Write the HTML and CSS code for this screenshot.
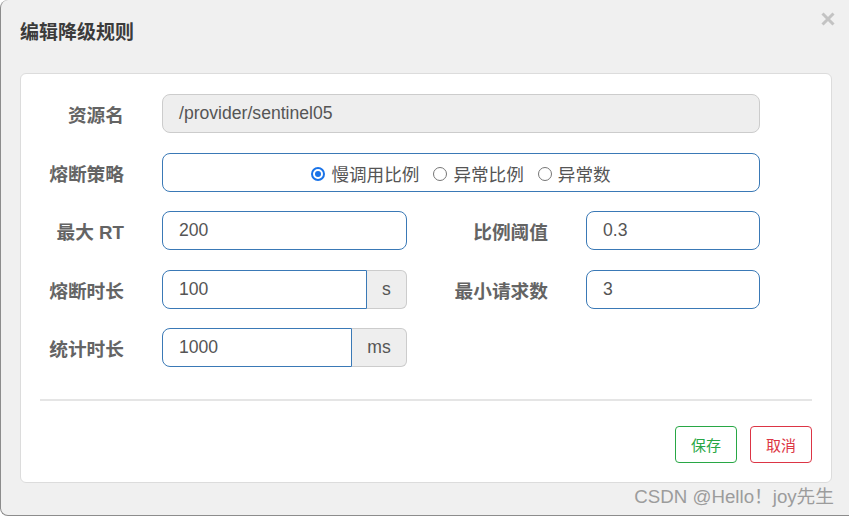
FILE: index.html
```html
<!DOCTYPE html>
<html lang="zh-CN">
<head>
<meta charset="utf-8">
<title>编辑降级规则</title>
<link rel="stylesheet" href="styles.css">
</head>
<body>
<div class="dialog">
  <div class="header">
    <h1 class="title">编辑降级规则</h1>
    <button class="close" aria-label="关闭">
      <svg width="14" height="14" viewBox="0 0 14 14"><path d="M1.5 1.5L12.5 12.5M12.5 1.5L1.5 12.5" stroke="#c3c3c3" stroke-width="3" stroke-linecap="butt"/></svg>
    </button>
  </div>
  <div class="card">
    <div class="form">
      <label class="label">资源名</label>
      <div class="field wide"><div class="input readonly">/provider/sentinel05</div></div>

      <label class="label">熔断策略</label>
      <div class="field wide">
        <div class="input radios">
          <span class="radio checked"><span class="dot"></span></span><span class="rtext">慢调用比例</span>
          <span class="radio"></span><span class="rtext">异常比例</span>
          <span class="radio"></span><span class="rtext last">异常数</span>
        </div>
      </div>

      <label class="label">最大 RT</label>
      <div class="field"><div class="input">200</div></div>
      <label class="label">比例阈值</label>
      <div class="field"><div class="input">0.3</div></div>

      <label class="label">熔断时长</label>
      <div class="field group">
        <div class="input grouped">100</div><div class="addon addon-s">s</div>
      </div>
      <label class="label">最小请求数</label>
      <div class="field"><div class="input">3</div></div>

      <label class="label">统计时长</label>
      <div class="field group">
        <div class="input grouped">1000</div><div class="addon addon-ms">ms</div>
      </div>
    </div>
    <div class="divider"></div>
    <div class="footer">
      <button class="btn btn-save">保存</button>
      <button class="btn btn-cancel">取消</button>
    </div>
  </div>
  <div class="watermark">CSDN @Hello！joy先生</div>
</div>
</body>
</html>
```
FILE: styles.css
```css
* { box-sizing: border-box; }
html, body { margin: 0; padding: 0; }
body {
  width: 849px;
  height: 516px;
  overflow: hidden;
  background: #ffffff;
  font-family: "Liberation Sans", "Noto Sans CJK SC", sans-serif;
}
.dialog {
  position: relative;
  width: 849px;
  height: 516px;
  background: #f0f0f0;
  border-left: 1px solid #8c8c8c;
  border-bottom: 1px solid #8c8c8c;
  border-top-left-radius: 8px;
  border-bottom-left-radius: 8px;
  padding: 0 18px 0 19px;
}
.header {
  height: 73px;
  padding-top: 20px;
}
.title {
  margin: 0;
  font-size: 19px;
  line-height: 26px;
  font-weight: bold;
  color: #3b3b3b;
}
.close {
  position: absolute;
  top: 12px;
  right: 14px;
  width: 14px;
  height: 14px;
  padding: 0;
  border: 0;
  background: none;
  display: flex;
}
.card {
  width: 812px;
  height: 410px;
  background: #ffffff;
  border: 1px solid #dcdcdc;
  border-radius: 6px;
  padding-top: 20px;
}
.form {
  display: grid;
  grid-template-columns: 103px 245px 103px 174px;
  grid-auto-rows: 39px;
  column-gap: 38px;
  row-gap: 19.5px;
}
.label {
  display: flex;
  align-items: center;
  justify-content: flex-end;
  font-size: 18.7px;
  font-weight: bold;
  color: #646464;
  white-space: nowrap;
}
.field { display: flex; }
.field.wide { grid-column: 2 / 5; }
.input {
  flex: 1;
  height: 39px;
  border: 1px solid #3a79b6;
  border-radius: 8px;
  padding: 0 16px;
  display: flex;
  align-items: center;
  font-size: 17.6px;
  color: #555555;
  background: #ffffff;
}
.input.readonly {
  background: #eeeeee;
  border-color: #cccccc;
}
.input.grouped {
  border-top-right-radius: 0;
  border-bottom-right-radius: 0;
}
.addon {
  height: 39px;
  background: #eeeeee;
  border: 1px solid #cccccc;
  border-left: 0;
  border-radius: 0 6px 6px 0;
  display: flex;
  align-items: center;
  justify-content: center;
  font-size: 17.6px;
  color: #555555;
}
.addon-s { width: 40px; }
.addon-ms { width: 55px; }
.radios {
  justify-content: center;
  padding-top: 3px;
}
.radio {
  width: 14px;
  height: 14px;
  border: 1px solid #767676;
  border-radius: 50%;
  display: flex;
  align-items: center;
  justify-content: center;
  margin-right: 6px;
  flex: none;
}
.radio.checked { border: 2px solid #1a73e8; }
.dot {
  width: 6px;
  height: 6px;
  border-radius: 50%;
  background: #1a73e8;
}
.rtext {
  font-size: 17.6px;
  color: #555555;
  margin-right: 14px;
}
.rtext.last { margin-right: 0; }
.divider {
  height: 2px;
  background: #e5e5e5;
  margin: 32px 19px 0 19px;
}
.footer {
  display: flex;
  justify-content: flex-end;
  gap: 13px;
  padding: 25px 19px 0 0;
}
.btn {
  width: 62px;
  height: 37px;
  background: #ffffff;
  border-radius: 4px;
  font-family: "Noto Sans CJK SC", sans-serif;
  font-size: 15px;
  padding: 0;
}
.btn-save { border: 1px solid #28a745; color: #28a745; }
.btn-cancel { border: 1px solid #dc3545; color: #dc3545; }
.watermark {
  position: absolute;
  right: 15px;
  bottom: 7px;
  font-size: 18.7px;
  color: #9c9c9c;
  white-space: nowrap;
}
```
